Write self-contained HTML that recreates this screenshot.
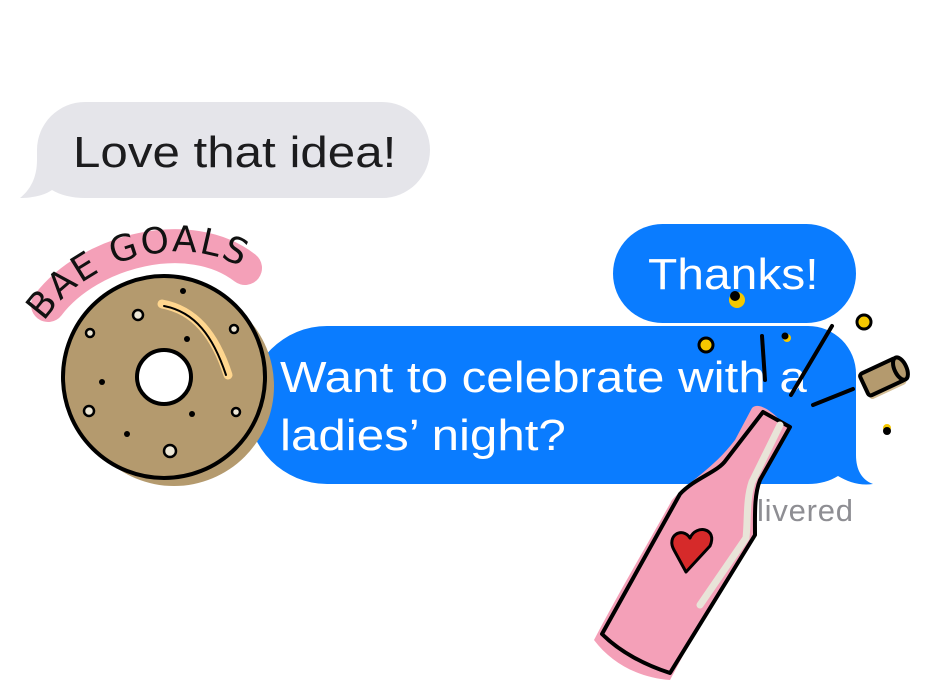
<!DOCTYPE html>
<html><head><meta charset="utf-8"><style>
html,body{margin:0;padding:0;background:#fff;width:939px;height:696px;overflow:hidden;position:relative;font-family:"Liberation Sans",Arial,sans-serif}
.t{position:absolute;white-space:nowrap;font-size:44px;line-height:1;transform:scaleX(1.12);transform-origin:0 0}
</style></head><body>
<svg width="939" height="696" style="position:absolute;left:0;top:0">
  <path d="M85 102 H382 A48 48 0 0 1 382 198 H85 C72 198 60 195 52 190 C45 195 33 198 20 198 C30 190 37 178 37 160 V150 A48 48 0 0 1 85 102 Z" fill="#e5e5ea"/>
  <rect x="613" y="224" width="243" height="99" rx="49.5" fill="#0a7cff"/>
  <path d="M327 326 H808 A48 48 0 0 1 856 374 V455 C856 470 862 480 873 484 C860 486 848 482 838 476 C830 481 820 484 808 484 H327 A79 79 0 0 1 327 326 Z" fill="#0a7cff"/>
  <text x="853" y="521" text-anchor="end" font-family="Liberation Sans, sans-serif" font-size="31" fill="#8e8e93" textLength="96">livered</text>

  <path d="M48 305 C90 250 190 225 245 268" stroke="#f4a0b8" stroke-width="34" fill="none" stroke-linecap="round"/>
  <path id="arc" d="M44 322 C90 252 200 226 262 282" fill="none"/>
  <text font-family="DejaVu Sans, sans-serif" font-size="36" fill="#111" letter-spacing="2"><textPath href="#arc">BAE GOALS</textPath></text>
  <circle cx="174" cy="386" r="100" fill="#b49a6e"/>
  <circle cx="164" cy="377" r="101" fill="#b49a6e" stroke="#000" stroke-width="4"/>
  <path d="M162 304 C195 310 215 335 228 375" stroke="#ffd68e" stroke-width="9" fill="none" stroke-linecap="round"/>
  <path d="M164 306 C195 312 213 336 226 375" stroke="#000" stroke-width="2" fill="none" stroke-linecap="round"/>
  <circle cx="164" cy="377" r="27" fill="#fff" stroke="#000" stroke-width="4"/>
  <g fill="#ece6d6" stroke="#000" stroke-width="2.5">
    <circle cx="138" cy="315" r="5"/><circle cx="90" cy="333" r="4"/><circle cx="234" cy="329" r="4"/>
    <circle cx="89" cy="411" r="5"/><circle cx="236" cy="412" r="4"/><circle cx="170" cy="451" r="6"/>
  </g>
  <g fill="#000"><circle cx="183" cy="291" r="3"/><circle cx="187" cy="339" r="3"/><circle cx="102" cy="382" r="3"/><circle cx="192" cy="414" r="3"/><circle cx="127" cy="434" r="3"/></g>
  <g stroke="#000" stroke-width="4" stroke-linecap="round">
    <line x1="853" y1="389" x2="813" y2="405"/>
  </g>
  <circle cx="706" cy="345" r="7" fill="#f5c800" stroke="#000" stroke-width="3"/>
  <circle cx="864" cy="322" r="7" fill="#f5c800" stroke="#000" stroke-width="3"/>
  <circle cx="787" cy="338" r="4" fill="#f5c800"/><circle cx="785" cy="336" r="3.5" fill="#000"/>
  <circle cx="887" cy="428" r="4" fill="#f5c800"/><circle cx="887" cy="431" r="4" fill="#000"/>
  <g transform="translate(885,378) rotate(-25)">
    <rect x="-22" y="-10" width="40" height="24" rx="3" fill="#c9ad7a" opacity="0.8"/>
    <rect x="-22" y="-14" width="40" height="24" rx="3" fill="#b49a6e" stroke="#000" stroke-width="4"/>
    <ellipse cx="18" cy="-2" rx="6" ry="12" fill="#b49a6e" stroke="#000" stroke-width="4"/>
  </g>
</svg>
<div class="t" style="left:73px;top:131px;color:#1c1c1e">Love that idea!</div>
<div class="t" style="left:648px;top:253px;color:#fff;transform:scaleX(1.09)">Thanks!</div>
<div class="t" style="left:280px;top:356px;color:#fff">Want to celebrate with a</div>
<div class="t" style="left:280px;top:414px;color:#fff">ladies’ night?</div>
<svg width="939" height="696" style="position:absolute;left:0;top:0;pointer-events:none">
  <path d="M752 408 C758 402 770 410 778 418 L756 500 C752 520 744 540 734 560 L670 680 C640 678 612 664 594 640 C620 590 650 540 672 500 C690 480 712 470 735 440 Z" fill="#f4a0b8"/>
  <path d="M763 412 L790 427 L760 480 C754 495 755 515 755 535 L670 673 C645 665 620 652 602 634 L680 494 C695 478 718 472 726 460 Z" fill="#f4a0b8" stroke="#000" stroke-width="4" stroke-linejoin="round"/>
  <path d="M780 425 L752 482 C746 500 748 520 746 538 L700 605" stroke="#e8e4d8" stroke-width="7" fill="none" stroke-linecap="round"/>
  <path d="M686 572 L674 550 C666 536 682 526 690 538 C696 524 718 528 710 546 Z" fill="#d62a2a" stroke="#000" stroke-width="3" stroke-linejoin="round"/>
  <g stroke="#000" stroke-width="4" stroke-linecap="round">
    <line x1="762" y1="336" x2="765" y2="380"/>
    <line x1="832" y1="326" x2="791" y2="395"/>
  </g>
  <circle cx="737" cy="300" r="8" fill="#f5c800"/><circle cx="735" cy="296" r="5" fill="#000"/>
</svg>
</body></html>
